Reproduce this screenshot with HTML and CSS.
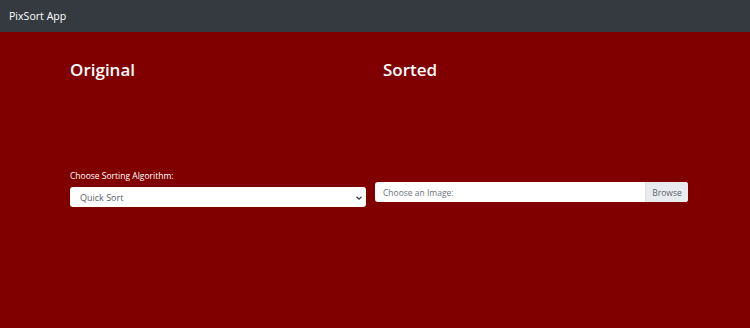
FILE: index.html
```html
<!DOCTYPE html>
<html lang="en">
<head>
<meta charset="utf-8">
<title>PixSort App</title>
<link rel="stylesheet" href="styles.css">
</head>
<body>
<nav class="navbar"><span class="brand">PixSort App</span></nav>
<main class="content">
  <h2 class="title">Original</h2>
  <h2 class="title title-right">Sorted</h2>
  <div class="field">
    <label class="label">Choose Sorting Algorithm:</label>
    <div class="select">
      <span>Quick Sort</span>
      <svg class="chev" width="8" height="6" viewBox="0 0 8 6"><path d="M1.5 1.8 L4 4.2 L6.5 1.8" fill="none" stroke="#343a40" stroke-width="1.2"/></svg>
    </div>
  </div>
  <div class="file">
    <span class="file-text">Choose an Image:</span>
    <span class="browse">Browse</span>
  </div>
</main>
</body>
</html>
```
FILE: styles.css
```css
html, body { margin: 0; padding: 0; }
body {
  background: #800000;
  font-family: "Open Sans", "Noto Sans", sans-serif;
  height: 328px;
  overflow: hidden;
}
.navbar {
  height: 32px;
  background: #343a40;
  display: flex;
  align-items: center;
  padding-left: 9px;
}
.brand { color: #fff; font-size: 10.6px; }
.content {
  display: grid;
  grid-template-columns: 296px 313px;
  column-gap: 9px;
  padding-left: 70px;
  align-items: start;
}
.title {
  margin: 27px 0 0 0;
  color: #fff;
  font-size: 17px;
  font-weight: 600;
  line-height: 22px;
}
.title-right { padding-left: 8px; }
.field { margin-top: 89px; display: flex; flex-direction: column; }
.label { color: #fff; font-size: 8.5px; line-height: 12px; margin-bottom: 5px; }
.select {
  height: 20px;
  background: #fff;
  border-radius: 3px;
  display: flex;
  align-items: center;
  justify-content: space-between;
  padding: 0 3px 0 10px;
  font-size: 9px;
  color: #5a6169;
}
.chev { margin-top: 1px; }
.file {
  margin-top: 101px;
  height: 20px;
  background: #fff;
  border-radius: 3px;
  display: flex;
  align-items: stretch;
  font-size: 8.5px;
  color: #6c757d;
  overflow: hidden;
}
.file-text { flex: 1; display: flex; align-items: center; padding-left: 8px; }
.browse {
  width: 42px;
  background: #e9ecef;
  display: flex;
  align-items: center;
  justify-content: center;
  color: #5c636a;
  border-left: 1px solid #dee2e6;
}
```
